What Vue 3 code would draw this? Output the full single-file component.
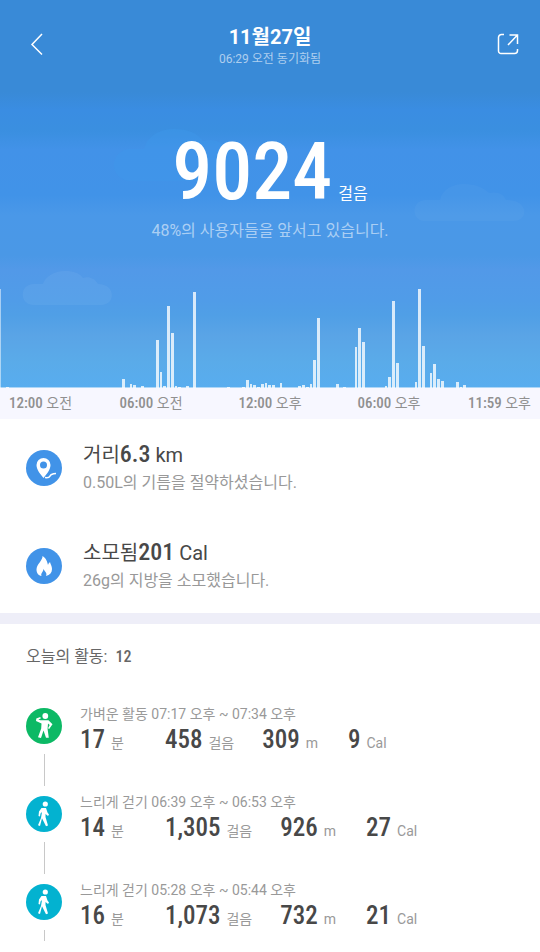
<script setup>
const bars = [
  [0, 1, 99], [6, 3, 1], [122, 3, 9], [130, 2, 4], [133, 3, 3], [141, 3, 2], [156, 3, 48],
  [160, 2, 16], [163, 3, 2], [167, 3, 82], [171, 3, 55], [175, 2, 2], [178, 3, 1], [186, 3, 2],
  [193, 3, 96], [227, 3, 1], [242, 3, 1], [246, 3, 8], [250, 2, 4], [253, 3, 3], [257, 3, 1],
  [261, 3, 4], [265, 2, 5], [268, 3, 3], [272, 3, 3], [280, 2, 5], [298, 3, 2], [302, 3, 3],
  [306, 3, 1], [310, 2, 4], [313, 3, 28], [317, 3, 70], [336, 3, 4], [343, 3, 1], [355, 2, 41],
  [358, 3, 60], [362, 3, 46], [385, 2, 2], [388, 3, 11], [392, 3, 87], [396, 3, 25], [415, 2, 6],
  [418, 3, 99], [422, 3, 42], [430, 2, 15], [433, 3, 24], [437, 3, 9], [441, 3, 7], [456, 3, 6],
  [460, 2, 1], [463, 3, 3]
]
const times = [['12:00', '오전'], ['06:00', '오전'], ['12:00', '오후'], ['06:00', '오후'], ['11:59', '오후']]
const activities = [
  { kind: 'light', name: '가벼운 활동', span: '07:17 오후 ~ 07:34 오후', min: '17', steps: '458', dist: '309', cal: '9' },
  { kind: 'walk', name: '느리게 걷기', span: '06:39 오후 ~ 06:53 오후', min: '14', steps: '1,305', dist: '926', cal: '27' },
  { kind: 'walk', name: '느리게 걷기', span: '05:28 오후 ~ 05:44 오후', min: '16', steps: '1,073', dist: '732', cal: '21' }
]
</script>

<template>
  <main class="page">
    <section class="hero">
      <svg class="clouds" viewBox="0 0 540 388" preserveAspectRatio="none" aria-hidden="true">
        <path d="M130 181a16 16 0 0 1 0-32h14c3-12 14-20 30-20 14 0 23 4 29 12 11-3 20 1 24 9h3a15 15 0 0 1 0 31z" fill="#3f99ea" fill-opacity=".4" />
        <path d="M425 221c-14 0-14-20 0-21h15c2-10 12-16 24-16s20 4 25 9c8-2 15 1 17 7 24 0 22 21 8 21z" fill="#fff" fill-opacity=".03" />
        <path d="M34 305c-15 0-15-21 0-21h9c2-7 11-13 22-13 9 0 14 2 18 7 6-2 12 1 15 6 18 0 18 21 3 21z" fill="#fff" fill-opacity=".05" />
      </svg>
      <header class="bar">
        <button class="icon-btn back" aria-label="뒤로">
          <svg width="24" height="24" viewBox="0 0 24 24"><path d="M20 2 10 12.500 20 22.500" /></svg>
        </button>
        <div class="heading">
          <h1>11월27일</h1>
          <p>06:29 오전 동기화됨</p>
        </div>
        <button class="icon-btn share" aria-label="공유">
          <svg width="24" height="24" viewBox="0 0 24 24"><path d="M8 2.500H5.500a3 3 0 0 0-3 3v13.500a2.500 2.500 0 0 0 2.500 2.500h13.500a3 3 0 0 0 3-3V17" /><path d="M12 13 21 3.500M13.500 3H21.500V12" /></svg>
        </button>
      </header>
      <div class="total"><strong>9024</strong><span>걸음</span></div>
      <p class="rank">48%의 사용자들을 앞서고 있습니다.</p>
      <svg class="chart" viewBox="0 0 540 100" preserveAspectRatio="none" role="img" aria-label="시간별 걸음">
        <rect x="0" y="99" width="540" height="1" fill="#fff" fill-opacity=".5" />
        <rect v-for="(b, i) in bars" :key="i" :x="b[0]" :y="100 - b[2]" :width="b[1]" :height="b[2]" fill="#fff" :fill-opacity="i ? 0.78 : 0.5" />
      </svg>
    </section>
    <div class="times"><span v-for="t in times" :key="t.join()"><b>{{ t[0] }}</b> {{ t[1] }}</span></div>

    <section class="stats">
      <div class="stat">
        <svg class="badge" viewBox="0 0 36 36" aria-hidden="true">
          <circle cx="18" cy="18" r="18" fill="#4193e8" />
          <path fill="#fff" fill-rule="evenodd" d="M17.500 8a7 7 0 0 0-7 7c0 5 4 9 7 13 3-4 7-8 7-13a7 7 0 0 0-7-7zm0 3.500a3.500 3.500 0 1 1 0 7 3.500 3.500 0 0 1 0-7z" />
          <path d="M19 27.500c6 1 4-2 6.500-3 2-1 2-1 4.500-1" fill="none" stroke="#fff" stroke-width="1.500" />
        </svg>
        <div><h2>거리<b>6.3</b> km</h2><p>0.50L의 기름을 절약하셨습니다.</p></div>
      </div>
      <div class="stat">
        <svg class="badge" viewBox="0 0 36 36" aria-hidden="true">
          <circle cx="18" cy="18" r="18" fill="#4193e8" />
          <path fill="#fff" d="M16.500 8c.5 4-6 8.500-6 13.500 0 3.500 2 6 5 6.500-1-3 1.500-3.500 2-7 1.500 3 4 4 2.500 7 4-1 6-3.500 6-7 0-3-1.500-4.500-2-7-1 1-1.500 1.500-2 3-1-3.500-1.500-6.500-5.500-9z" />
        </svg>
        <div><h2>소모됨<b>201</b> Cal</h2><p>26g의 지방을 소모했습니다.</p></div>
      </div>
    </section>

    <section class="activities">
      <h3>오늘의 활동: <b>12</b></h3>
      <ol>
        <li v-for="a in activities" :key="a.span">
          <div class="rail">
            <svg class="badge" viewBox="0 0 36 36" aria-hidden="true">
              <template v-if="a.kind === 'light'">
                <circle cx="18" cy="18" r="18" fill="#0cb965" />
                <circle cx="19.300" cy="8" r="2.900" fill="#fff" />
                <path fill="#fff" fill-rule="evenodd" d="M14.500 12.200H22.500l4 4-3.300 4.800-1.200-.8 1.700-3.200-1.700-1.600-.4 5.600 1.200 8.800h-2.800L17.500 22.500 15 30l-3-.8 3.200-8.700.3-5-5.500-2.500.3-2.600 4-1.400.5 1.500-2.500 1z" />
              </template>
              <template v-else>
                <circle cx="18" cy="18" r="18" fill="#03b2d0" />
                <circle cx="19.300" cy="8" r="2.600" fill="#fff" />
                <path fill="#fff" d="M15.500 12h4.500l1.500 4.500 1.500 2-1 1.500-2.500-2v3l2.500 8.500-2 .8-4-8-2 7.700-2-.8L15 22l1-6-1.500 1.500-.5 3-1.500-.5.500-4.500z" />
              </template>
            </svg>
            <i></i>
          </div>
          <div>
            <p class="when">{{ a.name }} {{ a.span }}</p>
            <div class="values">
              <span><b>{{ a.min }}</b>분</span>
              <span><b>{{ a.steps }}</b>걸음</span>
              <span><b>{{ a.dist }}</b>m</span>
              <span><b>{{ a.cal }}</b>Cal</span>
            </div>
          </div>
        </li>
      </ol>
    </section>
  </main>
</template>

<style>
body { margin: 0; background: #fff; }
</style>

<style scoped>
.page { font-family: Roboto, "Noto Sans CJK KR", sans-serif; color: #484848; background: #fff; }
h1, h2, h3, p, ol { margin: 0; padding: 0; font-weight: 400; }
.total strong, .times b, .stat b, .activities b { font-family: "Roboto Condensed", "Liberation Sans Narrow", sans-serif; font-weight: 500; }
.hero {
  position: relative;
  display: flex;
  flex-direction: column;
  height: 388px;
  color: #fff;
  background: linear-gradient(#398ad7 0, #398ad7 92px, #3a8de2 110px, #3a8fe0 130px, #4292e8 150px, #4193e8 195px, #4a98e8 215px, #4a98e6 255px, #5299e8 270px, #509ce8 300px, #509fe6 315px, #5aa4e6 335px, #5aabe9 362px, #58adef 388px);
}
.clouds { position: absolute; inset: 0; width: 100%; height: 100%; }
.bar { position: relative; display: flex; justify-content: space-between; padding: 24px 20px 0; }
.icon-btn { display: flex; align-items: center; width: 28px; height: 40px; padding: 0; border: 0; background: none; }
.icon-btn svg { fill: none; stroke: #fff; stroke-width: 1.5; }
.back { justify-content: center; }
.share { justify-content: flex-end; }
.heading { text-align: center; }
.heading h1 { font-size: 20px; line-height: 26px; font-weight: 700; }
.heading p { font-size: 12px; line-height: 18px; color: rgba(255, 255, 255, .6); }
.total { position: relative; display: flex; justify-content: center; align-items: baseline; gap: 6px; margin-top: 62px; line-height: 84px; }
.total strong { font-size: 80px; }
.total span { font-size: 16px; line-height: 24px; }
.rank { position: relative; text-align: center; font-size: 16px; line-height: 24px; margin-top: 5px; color: rgba(255, 255, 255, .55); }
.chart { position: relative; width: 100%; height: 100px; margin-top: auto; }
.times { display: grid; grid-template-columns: 10fr 13fr 13fr 13fr 10fr; background: #f7f7ff; color: #909090; font-size: 14px; line-height: 31px; text-align: center; white-space: nowrap; }
.times b { font-size: 15px; }
.times span:first-child { text-align: left; padding-left: 9px; }
.times span:last-child { text-align: right; padding-right: 9px; }
.stats { display: grid; gap: 42px; padding: 21px 26px 19px; border-bottom: 11px solid #eeeef8; }
.stat { display: flex; align-items: center; gap: 21px; }
.badge { display: block; width: 36px; height: 36px; flex: none; }
.stat h2 { font-size: 20px; line-height: 30px; }
.stat h2 b { font-size: 24px; line-height: 24px; }
.stat p { font-size: 16px; line-height: 26px; color: #999; }
.activities { padding: 21px 26px 0; }
.activities h3 { font-size: 16px; line-height: 24px; color: #666; }
.activities h3 b { margin-left: 4px; }
ol { list-style: none; padding-top: 34px; }
li { display: flex; gap: 18px; height: 88px; }
.rail { display: flex; flex-direction: column; align-items: center; gap: 10px; padding-top: 5px; }
.rail i { width: 1px; height: 32px; background: #c8c8c8; }
li:last-child .rail i { height: 11px; }
.when { font-size: 14px; line-height: 22px; color: #999; }
.values { display: flex; font-size: 14px; line-height: 36px; color: #999; }
.values span { margin-right: 28px; }
.values span:first-child { margin-right: 41px; }
.values span:nth-child(3) { margin-right: 30px; }
.values b { margin-right: 6px; font-size: 25px; line-height: 30px; color: #484848; }
</style>
